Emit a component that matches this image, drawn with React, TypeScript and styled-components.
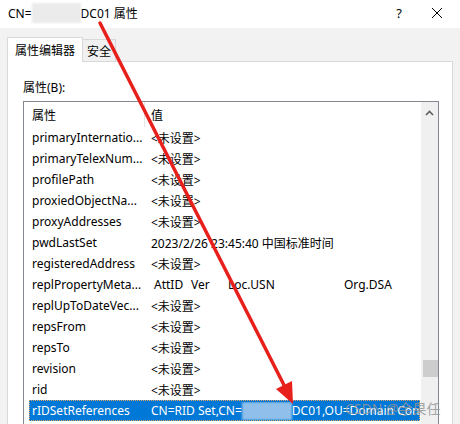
import React from 'react';
import styled, { createGlobalStyle } from 'styled-components';

const Global = createGlobalStyle`
  html, body { margin: 0; padding: 0; }
  body {
    width: 460px; height: 424px; overflow: hidden;
    background: #f2f2f2;
    font-family: "Noto Sans", "Noto Sans CJK SC", sans-serif;
    font-size: 12px; color: #000;
  }
`;

const FONT = `"Noto Sans", "Noto Sans CJK SC", sans-serif`;

const Dialog = styled.div`
  position: relative;
  width: 460px; height: 424px; overflow: hidden;
  background: #f2f2f2;
  font-family: ${FONT};
`;

const TitleBar = styled.div`
  height: 28px; background: #fff;
  display: flex; align-items: center;
  padding: 0 0 2px 8px; box-sizing: border-box;
  font-size: 12px;
`;

const TitleText = styled.div`
  flex: 1; display: flex; align-items: center; white-space: nowrap;
`;

const Blur = styled.span<{ $w: number; $h: number; $c: string }>`
  display: inline-block; flex: 0 0 auto;
  width: ${p => p.$w}px; height: ${p => p.$h}px;
  background: ${p => p.$c}; filter: blur(1px);
`;

const TitleButton = styled.div<{ $w: number }>`
  width: ${p => p.$w}px; height: 26px;
  display: flex; align-items: center; justify-content: center;
  font-size: 13px;
`;

const Body = styled.div`
  padding: 9px 7px 0 7px;
`;

const TabStrip = styled.div`
  display: flex; align-items: flex-end; height: 24px;
`;

const Tab = styled.div<{ $active?: boolean }>`
  box-sizing: border-box;
  position: relative; z-index: ${p => (p.$active ? 2 : 1)};
  height: ${p => (p.$active ? 25 : 22)}px;
  margin-bottom: ${p => (p.$active ? -1 : 0)}px;
  padding: 0 ${p => (p.$active ? 7 : 4)}px;
  background: ${p => (p.$active ? '#fff' : '#f0f0f0')};
  border: 1px solid #d9d9d9;
  border-bottom: none;
  ${p => (p.$active ? '' : 'border-left: none;')}
  display: flex; align-items: center;
  font-size: 12px; white-space: nowrap;
`;

const Panel = styled.div`
  position: relative; z-index: 1;
  background: #fff;
  border: 1px solid #d9d9d9;
  padding: 0 13px 0 15px;
  height: 400px;
`;

const Label = styled.div`
  height: 39px; display: flex; align-items: center; padding-top: 11px;
  box-sizing: border-box; font-size: 12px;
`;

const ListBox = styled.div`
  border: 1px solid #828790;
  display: flex; height: 360px;
`;

const ListContent = styled.div`
  flex: 1; padding: 0 1px 0 5px; min-width: 0;
`;

const Grid = styled.div<{ $header?: boolean; $selected?: boolean }>`
  display: grid; grid-template-columns: 116px minmax(0, 1fr);
  height: ${p => (p.$header ? 25 : 21)}px;
  align-items: center;
  background: ${p => (p.$selected ? '#0078d7' : 'transparent')};
  color: ${p => (p.$selected ? '#fff' : '#000')};
  outline: ${p => (p.$selected ? '1px dotted #e9a55f' : 'none')};
  outline-offset: -1px;
  white-space: nowrap;
  font-size: 12px;
`;

const NameCell = styled.div<{ $sep?: boolean }>`
  padding-left: 3px; overflow: hidden; height: 100%;
  display: flex; align-items: center;
  border-right: ${p => (p.$sep ? '1px solid #e5e5e5' : 'none')};
  box-sizing: border-box;
`;

const ValueCell = styled.div`
  padding-left: 6px; overflow: hidden; display: flex; align-items: center;
`;

const Col = styled.span<{ $w: number }>`
  display: inline-block; flex: 0 0 auto; width: ${p => p.$w}px;
`;

const ScrollBar = styled.div`
  width: 17px; background: #f0f0f0; position: relative;
  display: flex; flex-direction: column; align-items: center;
`;

const ScrollUp = styled.div`
  height: 20px; width: 17px; display: flex; align-items: center; justify-content: center;
  padding-top: 1px;
`;

const Thumb = styled.div`
  width: 15px; height: 17px; background: #cdcdcd;
  margin-top: 237px; margin-left: 1px;
`;

const Overlay = styled.svg`
  position: absolute; left: 0; top: 0; width: 460px; height: 424px;
  pointer-events: none; z-index: 10;
`;

const Watermark = styled.div`
  position: absolute; left: 345px; top: 398px; z-index: 11;
  font-family: ${FONT}; font-size: 14px; color: rgba(150, 150, 150, 0.85);
  white-space: nowrap;
`;

const UNSET = '<未设置>';

type Row = { name: string; value: React.ReactNode; selected?: boolean };

const rows: Row[] = [
  { name: 'primaryInternatio...', value: UNSET },
  { name: 'primaryTelexNum...', value: UNSET },
  { name: 'profilePath', value: UNSET },
  { name: 'proxiedObjectNa...', value: UNSET },
  { name: 'proxyAddresses', value: UNSET },
  { name: 'pwdLastSet', value: '2023/2/26 23:45:40 中国标准时间' },
  { name: 'registeredAddress', value: UNSET },
  {
    name: 'replPropertyMeta...',
    value: (
      <>
        <Col $w={37} style={{ marginLeft: 3 }}>AttID</Col>
        <Col $w={37}>Ver</Col>
        <Col $w={116}>Loc.USN</Col>
        <Col $w={60}>Org.DSA</Col>
      </>
    ),
  },
  { name: 'replUpToDateVec...', value: UNSET },
  { name: 'repsFrom', value: UNSET },
  { name: 'repsTo', value: UNSET },
  { name: 'revision', value: UNSET },
  { name: 'rid', value: UNSET },
  {
    name: 'rIDSetReferences',
    selected: true,
    value: (
      <>
        CN=RID Set,CN=
        <Blur $w={50} $h={18} $c="#8fbfea" />
        DC01,OU=Domain Controllers
      </>
    ),
  },
];

export default function App() {
  return (
    <Dialog>
      <Global />
      <TitleBar>
        <TitleText>
          CN=
          <Blur $w={49} $h={20} $c="#ebebeb" />
          DC01 属性
        </TitleText>
        <TitleButton $w={30}>?</TitleButton>
        <TitleButton $w={46}>
          <svg width="12" height="12" viewBox="0 0 12 12">
            <path d="M1 1 L11 11 M11 1 L1 11" stroke="#000" strokeWidth="1" />
          </svg>
        </TitleButton>
      </TitleBar>
      <Body>
        <TabStrip>
          <Tab $active>属性编辑器</Tab>
          <Tab>安全</Tab>
        </TabStrip>
        <Panel>
          <Label>属性(B):</Label>
          <ListBox>
            <ListContent>
              <Grid $header>
                <NameCell $sep>属性</NameCell>
                <ValueCell>值</ValueCell>
              </Grid>
              {rows.map(r => (
                <Grid key={r.name} $selected={r.selected}>
                  <NameCell>{r.name}</NameCell>
                  <ValueCell>{r.value}</ValueCell>
                </Grid>
              ))}
            </ListContent>
            <ScrollBar>
              <ScrollUp>
                <svg width="9" height="6" viewBox="0 0 9 6">
                  <path d="M1 5 L4.5 1.5 L8 5" stroke="#606060" strokeWidth="1.6" fill="none" />
                </svg>
              </ScrollUp>
              <Thumb />
            </ScrollBar>
          </ListBox>
        </Panel>
      </Body>
      <Overlay viewBox="0 0 460 424">
        <line x1="100" y1="23" x2="286" y2="389" stroke="#e8201c" strokeWidth="3.5" strokeLinecap="round" />
        <polygon points="293,404 276,389 292,381" fill="#e8201c" />
      </Overlay>
      <Watermark>CSDN @余果任</Watermark>
    </Dialog>
  );
}
